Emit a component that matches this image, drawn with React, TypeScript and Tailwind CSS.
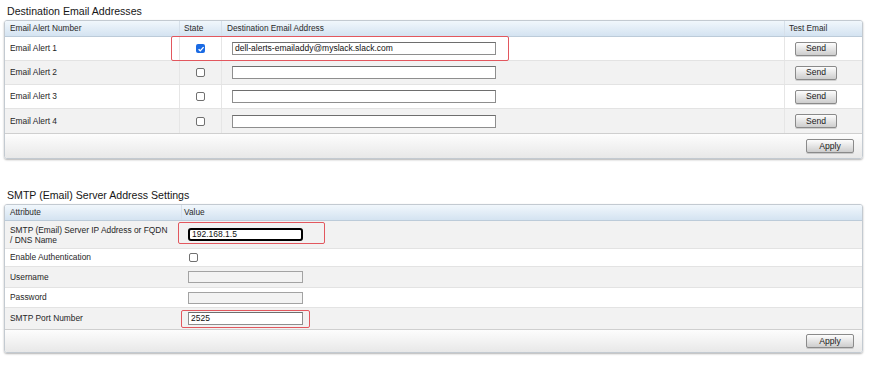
import type { ReactNode } from 'react'

const alerts = [
  { id: 1, on: true, email: 'dell-alerts-emailaddy@myslack.slack.com' },
  { id: 2, on: false, email: '' },
  { id: 3, on: false, email: '' },
  { id: 4, on: false, email: '' },
]

function Check({ checked }: { checked?: boolean }) {
  if (checked) {
    return (
      <span className="flex h-[9px] w-[9px] items-center justify-center rounded-[2px] bg-[#1a6ae3]">
        <svg viewBox="0 0 10 10" className="h-[8px] w-[8px]">
          <path d="M2 5.3 4.1 7.3 8.2 2.6" fill="none" stroke="white" strokeWidth="1.7" />
        </svg>
      </span>
    )
  }
  return <span className="block h-[9px] w-[9px] rounded-[2px] border border-[#707070] bg-white" />
}

function Btn({ children, w }: { children: ReactNode; w: string }) {
  return (
    <button
      className={`${w} flex h-[14px] items-center justify-center rounded-[2px] border border-[#8a8a8a] bg-gradient-to-b from-[#fdfdfd] to-[#cdcdcd] text-[8.6px] leading-none text-[#1a1a1a] shadow-[0_1px_0_rgba(0,0,0,0.15)]`}
    >
      {children}
    </button>
  )
}

function Title({ children, className = '' }: { children: ReactNode; className?: string }) {
  return <div className={`h-[20px] pl-[7px] pt-[5px] text-[10.6px] leading-[12px] text-[#161616] ${className}`}>{children}</div>
}

function Panel({ children }: { children: ReactNode }) {
  return (
    <div className="ml-[4px] w-[859px] overflow-hidden rounded-[3px] border border-[#c3cad1] shadow-[0_1px_2px_rgba(0,0,0,0.3)]">
      {children}
    </div>
  )
}

function Footer({ h }: { h: string }) {
  return (
    <div className={`${h} flex items-center justify-end border-t border-[#cfcfcf] bg-gradient-to-b from-[#fdfdfd] to-[#e8e8e8] pr-[8px]`}>
      <Btn w="w-[48px]">Apply</Btn>
    </div>
  )
}

const headerCls =
  'flex h-[16px] border-b border-[#bccbd9] bg-gradient-to-b from-[#f1f7fc] to-[#d4e3f1] text-[8.3px] text-[#2a2a2a]'

export default function App() {
  return (
    <div className="relative h-[366px] w-[879px] overflow-hidden bg-white font-['Liberation_Sans',Arial,sans-serif] text-[#262626]">
      <Title>Destination Email Addresses</Title>
      <Panel>
        <div className={headerCls}>
          <div className="flex w-[174px] items-center pl-[5px]">Email Alert Number</div>
          <div className="flex w-[42px] items-center border-l border-[#d6e0ea] pl-[4px]">State</div>
          <div className="flex w-[563px] items-center border-l border-[#d6e0ea] pl-[5px]">Destination Email Address</div>
          <div className="flex flex-1 items-center border-l border-[#d6e0ea] pl-[4px]">Test Email</div>
        </div>
        {alerts.map((a, i) => (
          <div
            key={a.id}
            className={`flex h-[24px] text-[8.4px] ${i % 2 ? 'bg-[#f2f2f2]' : 'bg-white'} ${i < 3 ? 'border-b border-[#e3e3e3]' : ''}`}
          >
            <div className="flex w-[174px] items-center pl-[5px]">Email Alert {a.id}</div>
            <div className="flex w-[42px] items-center justify-center border-l border-[#e6e6e6]">
              <Check checked={a.on} />
            </div>
            <div className="flex w-[563px] items-center border-l border-[#e6e6e6] pl-[10px]">
              <div className="flex h-[13px] w-[264px] items-center border border-[#8e8e8e] border-t-[#6e6e6e] bg-white pl-[2px] text-[8.5px] text-[#111]">
                {a.email}
              </div>
            </div>
            <div className="flex flex-1 items-center border-l border-[#e6e6e6] pl-[10px]">
              <Btn w="w-[42px]">Send</Btn>
            </div>
          </div>
        ))}
        <Footer h="h-[25px]" />
      </Panel>

      <Title className="mt-[25px]">SMTP (Email) Server Address Settings</Title>
      <Panel>
        <div className={headerCls}>
          <div className="flex w-[176px] items-center pl-[5px]">Attribute</div>
          <div className="flex flex-1 items-center border-l border-[#d6e0ea] pl-[2px]">Value</div>
        </div>
        <div className="flex h-[28px] border-b border-[#e3e3e3] bg-[#f2f2f2] text-[8.4px]">
          <div className="flex w-[176px] items-center pl-[5px] leading-[10px]">
            SMTP (Email) Server IP Address or FQDN
            <br />/ DNS Name
          </div>
          <div className="flex flex-1 items-center pl-[7px]">
            <div className="flex h-[13px] w-[115px] items-center rounded-[3px] border-2 border-black bg-white pl-[2px] text-[8.5px] text-[#111]">
              192.168.1.5
            </div>
          </div>
        </div>
        <div className="flex h-[18px] border-b border-[#e3e3e3] bg-white text-[8.4px]">
          <div className="flex w-[176px] items-center pl-[5px]">Enable Authentication</div>
          <div className="flex flex-1 items-center pl-[8px]">
            <Check />
          </div>
        </div>
        <div className="flex h-[21px] border-b border-[#e3e3e3] bg-[#f2f2f2] text-[8.4px]">
          <div className="flex w-[176px] items-center pl-[5px]">Username</div>
          <div className="flex flex-1 items-center pl-[7px]">
            <div className="h-[12px] w-[115px] border border-[#a3a3a3] bg-[#f3f3f3]" />
          </div>
        </div>
        <div className="flex h-[20px] border-b border-[#e3e3e3] bg-white text-[8.4px]">
          <div className="flex w-[176px] items-center pl-[5px]">Password</div>
          <div className="flex flex-1 items-center pl-[7px]">
            <div className="h-[12px] w-[115px] border border-[#a3a3a3] bg-[#f3f3f3]" />
          </div>
        </div>
        <div className="flex h-[21px] bg-[#f2f2f2] text-[8.4px]">
          <div className="flex w-[176px] items-center pl-[5px]">SMTP Port Number</div>
          <div className="flex flex-1 items-center pl-[7px]">
            <div className="flex h-[13px] w-[115px] items-center border border-[#8e8e8e] border-t-[#6e6e6e] bg-white pl-[2px] text-[8.5px] text-[#111]">
              2525
            </div>
          </div>
        </div>
        <Footer h="h-[23px]" />
      </Panel>

      {/* red annotation boxes */}
      <div className="absolute left-[171px] top-[36px] h-[25px] w-[338px] rounded-[2px] border border-[#e2575e]" />
      <div className="absolute left-[178px] top-[222px] h-[22px] w-[147px] rounded-[2px] border border-[#e2575e]" />
      <div className="absolute left-[181px] top-[310px] h-[18px] w-[129px] rounded-[2px] border border-[#e2575e]" />
    </div>
  )
}
